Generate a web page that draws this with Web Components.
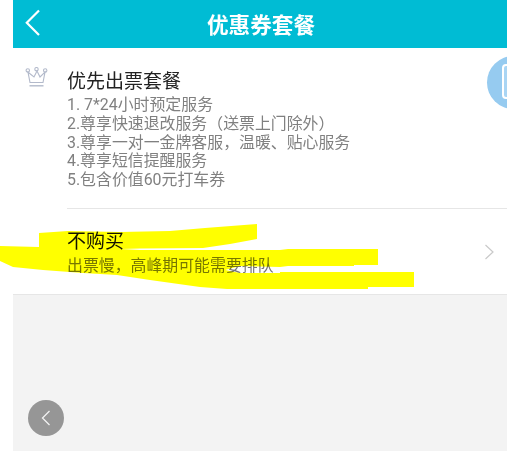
<!DOCTYPE html>
<html lang="zh">
<head>
<meta charset="utf-8">
<style>
html,body{margin:0;padding:0;background:#fff}
body{font-family:Roboto,"Noto Sans CJK SC",sans-serif;width:507px;height:451px;overflow:hidden}
</style>
</head>
<body>
<app-shell>
  <top-bar title-text="优惠券套餐"></top-bar>
  <package-row kind="crown" heading="优先出票套餐">
    <div>1. 7*24小时预定服务</div>
    <div>2.尊享快速退改服务（送票上门除外）</div>
    <div>3.尊享一对一金牌客服，温暖、贴心服务</div>
    <div>4.尊享短信提醒服务</div>
    <div>5.包含价值60元打车券</div>
  </package-row>
  <package-row kind="plain" heading="不购买">
    <div>出票慢，高峰期可能需要排队</div>
  </package-row>
  <gray-footer></gray-footer>
</app-shell>
<script>
function def(name, css, html, init){
  customElements.define(name, class extends HTMLElement{
    connectedCallback(){
      if(this.shadowRoot) return;
      const r=this.attachShadow({mode:'open'});
      r.innerHTML='<style>'+css+'</style>'+html(this);
      if(init) init(this,r);
    }
  });
}
def('app-shell',`
  :host{display:flex;flex-direction:column;position:relative;width:507px;height:451px;box-sizing:border-box;padding-left:13px;overflow:hidden}
  svg{position:absolute;left:0;top:0;width:507px;height:451px;mix-blend-mode:multiply;pointer-events:none}
`,()=>`<slot></slot>
  <svg viewBox="0 0 507 451"><path fill="#ffff00" d="M0 246L39 247V233L68 231L120 232L170 231L205 228L257 224V239L230 244L203 248L140 248.5L120 249L140 250H280L288 249H378V265H354V266H288L280 267L240 266L225 270L240 273H280V272H414V287H368V289H227L200 287L150 280L117 275L83 273L43 270L13 267L0 261Z"/></svg>`);
def('top-bar',`
  :host{display:flex;align-items:center;justify-content:center;position:relative;height:48px;background:#00bcd4;color:#fff;font-size:21.6px;font-weight:700;flex:none}
  svg{position:absolute;left:10px;top:8px}
  span{position:relative;top:-1px;left:1px}
`,el=>`<svg width="20" height="30" viewBox="0 0 20 30"><path d="M16 2.5L3.8 14.7L16 27" fill="none" stroke="#fff" stroke-width="2.2"/></svg><span>${el.getAttribute('title-text')}</span>`);
def('package-row',`
  :host{display:flex;flex:none;position:relative;background:#fff;overflow:hidden}
  .icon{flex:none;width:54px;display:flex;justify-content:center;padding:19px 7px 0 0;box-sizing:border-box}
  .body{flex:1;min-width:0;padding-top:22px;border-bottom:1px solid #e6e6e6;height:161px;box-sizing:border-box}
  :host([kind=plain]) .body{height:86px;padding-top:21px}
  :host([kind=plain]) .icon{border-bottom:1px solid #e6e6e6}
  h3{margin:0;font-size:19px;font-weight:400;line-height:23px;color:#222}
  .list{font-size:15.9px;line-height:18.75px;color:#808080;margin-top:3px}
  :host([kind=plain]) h3{color:#111}
  :host([kind=plain]) .list{margin-top:4px;color:#777}
  .badge{position:absolute;left:474px;top:8px;width:53px;height:53px;border-radius:50%;background:#96cbf0}
  .badge i{position:absolute;left:15px;top:8px;width:30px;height:35px;box-sizing:border-box;border:2.5px solid #fff;border-radius:4px;background:#a9d5f4}
  .chev{position:absolute;right:12px;top:35px}
`,el=>{
  const crown=el.getAttribute('kind')==='crown';
  return `<div class="icon">${crown?`<svg width="23" height="21" viewBox="0 0 23 21" fill="none" stroke="#b3bacb" stroke-width="1.1"><circle cx="2.8" cy="3.4" r="1.7"/><circle cx="11.5" cy="2.2" r="1.7"/><circle cx="20.2" cy="3.4" r="1.7"/><path d="M3 5.2L5 15.5H18L20 5.2L15 10L12 4L9 10Z"/><path d="M4.5 18.8H18.5" stroke-width="1.4"/></svg>`:''}</div>
  <div class="body"><h3>${el.getAttribute('heading')}</h3><div class="list"><slot></slot></div></div>
  ${crown?'<div class="badge"><i></i></div>':'<svg class="chev" width="11" height="16" viewBox="0 0 11 16"><path d="M1.5 1L9 8L1.5 15" fill="none" stroke="#c9c9c9" stroke-width="1.2"/></svg>'}`;
});
def('gray-footer',`
  :host{display:flex;flex:1;align-items:flex-end;background:#f3f3f3;padding:0 0 15px 15px}
  div{width:36px;height:36px;border-radius:50%;background:#969696;display:flex;align-items:center;justify-content:center}
`,()=>`<div><svg width="10" height="16" viewBox="0 0 10 16"><path d="M8.5 1L1.5 8L8.5 15" fill="none" stroke="#f2f2f2" stroke-width="1.3"/></svg></div>`);
</script>
</body>
</html>
